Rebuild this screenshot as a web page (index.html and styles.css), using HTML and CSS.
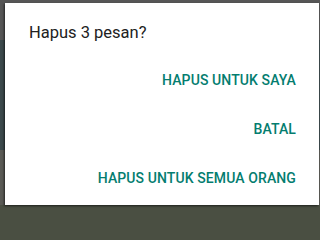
FILE: index.html
```html
<!DOCTYPE html>
<html lang="id">
<head>
<meta charset="utf-8">
<title>Hapus pesan</title>
<link rel="stylesheet" href="styles.css">
</head>
<body>
<div class="dialog">
  <div class="title">Hapus 3 pesan?</div>
  <div class="actions">
    <div class="btn">HAPUS UNTUK SAYA</div>
    <div class="btn">BATAL</div>
    <div class="btn">HAPUS UNTUK SEMUA ORANG</div>
  </div>
</div>
</body>
</html>
```
FILE: styles.css
```css
html {
  background: #4a4f42;
}
html, body {
  margin: 0;
  padding: 0;
  width: 320px;
  height: 212px;
  overflow: hidden;
}
body {
  background: linear-gradient(to bottom, #565656 0 40px, #3c494c 40px 150px, #5a5a55 150px 205px, #4a4f42 205px 212px);
  font-family: Roboto, "Liberation Sans", sans-serif;
}
.dialog {
  margin: 3px 1px 0 5px;
  height: 202px;
  background: #fff;
  box-shadow: -1px 1px 2px rgba(0,0,0,0.6);
  box-sizing: border-box;
  padding: 20px 23px 0 24px;
  display: flex;
  flex-direction: column;
}
.title {
  font-size: 16.5px;
  line-height: 20px;
  color: #212121;
  margin-bottom: 13px;
}
.actions {
  display: flex;
  flex-direction: column;
  align-items: flex-end;
}
.btn {
  font-size: 14px;
  font-weight: 500;
  line-height: 49px;
  color: #047d6f;
  letter-spacing: 0.1px;
}
```
